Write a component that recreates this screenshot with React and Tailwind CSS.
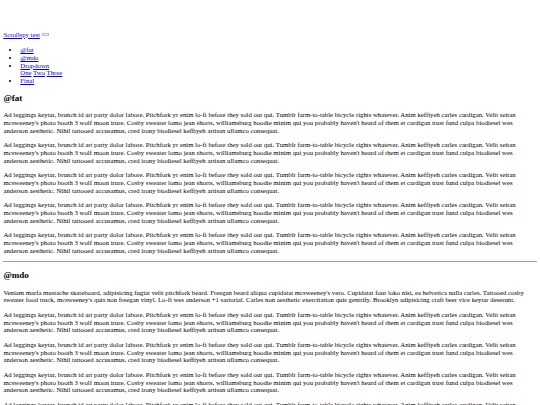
import React from 'react';

const LEGGINGS =
  "Ad leggings keytar, brunch id art party dolor labore. Pitchfork yr enim lo-fi before they sold out qui. Tumblr farm-to-table bicycle rights whatever. Anim keffiyeh carles cardigan. Velit seitan mcsweeney's photo booth 3 wolf moon irure. Cosby sweater lomo jean shorts, williamsburg hoodie minim qui you probably haven't heard of them et cardigan trust fund culpa biodiesel wes anderson aesthetic. Nihil tattooed accusamus, cred irony biodiesel keffiyeh artisan ullamco consequat.";

const VENIAM =
  "Veniam marfa mustache skateboard, adipisicing fugiat velit pitchfork beard. Freegan beard aliqua cupidatat mcsweeney's vero. Cupidatat four loko nisi, ea helvetica nulla carles. Tattooed cosby sweater food truck, mcsweeney's quis non freegan vinyl. Lo-fi wes anderson +1 sartorial. Carles non aesthetic exercitation quis gentrify. Brooklyn adipisicing craft beer vice keytar deserunt.";

// plain browser-default look, scaled down to the 540px window
const link = 'text-[#0000ee] underline';

function Para({ children }) {
  return <p className="my-[6.75px]">{children}</p>;
}

export default function App() {
  return (
    <div className="min-h-[405px] bg-white px-[3.4px] pt-[30.5px] text-[6.75px] leading-[1.15] text-black [font-family:'Liberation_Serif','Times_New_Roman',serif]">
      <nav>
        <div>
          <a href="#" className={link}>Scrollspy test</a>{' '}
          <button className="inline-block h-[3px] w-[7px] border border-[#bdbdbd] bg-[#efefef] align-middle" />
          <ul className="mt-[7.75px] mb-[6.75px] list-disc pl-[16.9px] leading-[7.8px]">
            <li><a href="#fat" className={link}>@fat</a></li>
            <li><a href="#mdo" className={link}>@mdo</a></li>
            <li>
              <a href="#" className={link}>Dropdown</a>
              <div>
                <a href="#one" className={link}>One</a>{' '}
                <a href="#two" className={link}>Two</a>{' '}
                <a href="#three" className={link}>Three</a>
              </div>
            </li>
            <li><a href="#final" className={link}>Final</a></li>
          </ul>
        </div>
      </nav>

      <div>
        <h4 id="fat" className="my-[8px] text-[9px] font-bold">@fat</h4>
        <Para>{LEGGINGS}</Para>
        <Para>{LEGGINGS}</Para>
        <Para>{LEGGINGS}</Para>
        <Para>{LEGGINGS}</Para>
        <Para>{LEGGINGS}</Para>
        <hr className="my-[6.75px] border-t border-[#a0a0a0]" />
        <h4 id="mdo" className="my-[8px] text-[9px] font-bold">@mdo</h4>
        <Para>{VENIAM}</Para>
        <Para>{LEGGINGS}</Para>
        <Para>{LEGGINGS}</Para>
        <Para>{LEGGINGS}</Para>
        <Para>{LEGGINGS}</Para>
      </div>
    </div>
  );
}
